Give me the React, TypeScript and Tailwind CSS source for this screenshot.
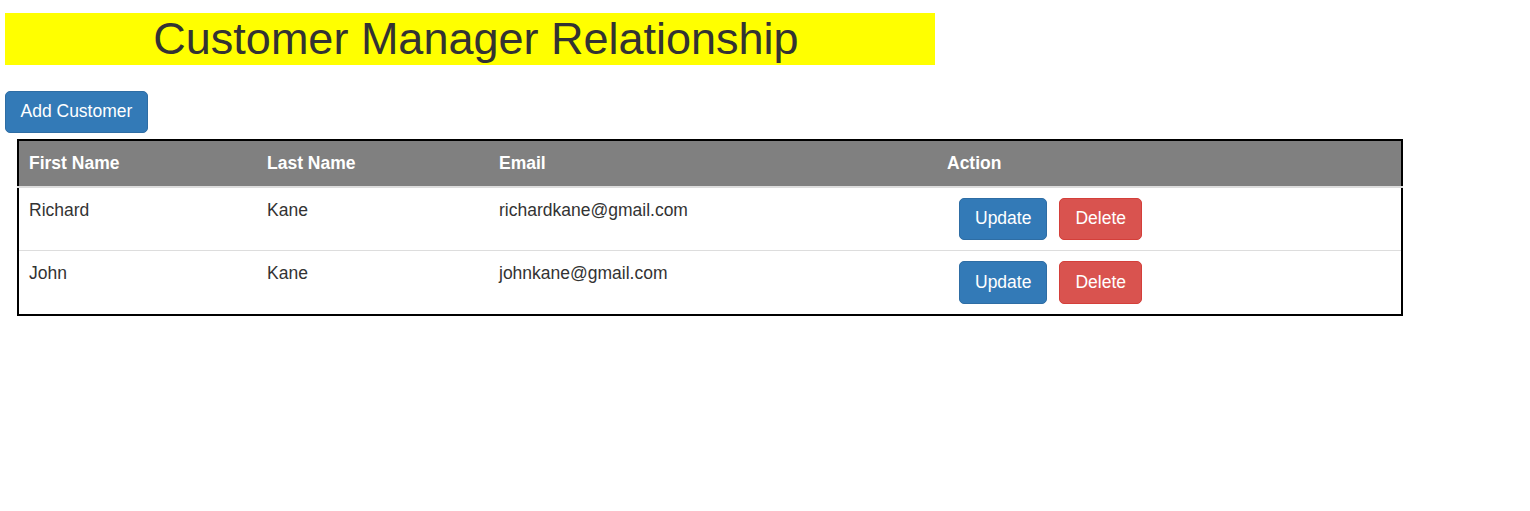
import React from "react";

const rows = [
  { first: "Richard", last: "Kane", email: "richardkane@gmail.com" },
  { first: "John", last: "Kane", email: "johnkane@gmail.com" },
];

export default function App() {
  return (
    <div
      className="min-h-[511px] bg-white pl-[5px] pt-[13px] text-[17.5px] leading-[25px] text-[#333]"
      style={{ fontFamily: '"Liberation Sans", Arial, sans-serif' }}
    >
      <div className="flex h-[52px] w-[930px] items-center justify-center bg-[#ffff00] pl-[12px]">
        <h1 className="text-[45px] leading-[52px] font-normal text-[#333]">
          Customer Manager Relationship
        </h1>
      </div>
      <button className="mt-[25.5px] h-[42.5px] rounded-[5px] border border-[#2e6da4] bg-[#337ab7] px-[14.5px] text-[17.5px] leading-[25px] text-white">
        Add Customer
      </button>
      <table className="mt-[5.5px] ml-[12px] w-[1386px] border-collapse border-2 border-black text-left">
        <thead>
          <tr className="bg-[#808080] text-white">
            <th className="w-[239px] border-b-[2.5px] border-[#ddd] p-[10px] align-bottom font-bold">First Name</th>
            <th className="w-[232px] border-b-[2.5px] border-[#ddd] p-[10px] align-bottom font-bold">Last Name</th>
            <th className="w-[448px] border-b-[2.5px] border-[#ddd] p-[10px] align-bottom font-bold">Email</th>
            <th className="border-b-[2.5px] border-[#ddd] p-[10px] align-bottom font-bold">Action</th>
          </tr>
        </thead>
        <tbody>
          {rows.map((r, i) => (
            <tr key={i}>
              <td className={`p-[10px] align-top ${i > 0 ? "border-t border-[#ddd]" : ""}`}>{r.first}</td>
              <td className={`p-[10px] align-top ${i > 0 ? "border-t border-[#ddd]" : ""}`}>{r.last}</td>
              <td className={`p-[10px] align-top ${i > 0 ? "border-t border-[#ddd]" : ""}`}>{r.email}</td>
              <td className={`p-[10px] align-top ${i > 0 ? "border-t border-[#ddd]" : ""}`}>
                <div className="flex">
                  <button className="ml-[12px] h-[42.5px] rounded-[5px] border border-[#2e6da4] bg-[#337ab7] px-[15px] text-[17.5px] leading-[25px] text-white">
                    Update
                  </button>
                  <button className="ml-[12px] h-[42.5px] rounded-[5px] border border-[#d43f3a] bg-[#d9534f] px-[15px] text-[17.5px] leading-[25px] text-white">
                    Delete
                  </button>
                </div>
              </td>
            </tr>
          ))}
        </tbody>
      </table>
    </div>
  );
}
